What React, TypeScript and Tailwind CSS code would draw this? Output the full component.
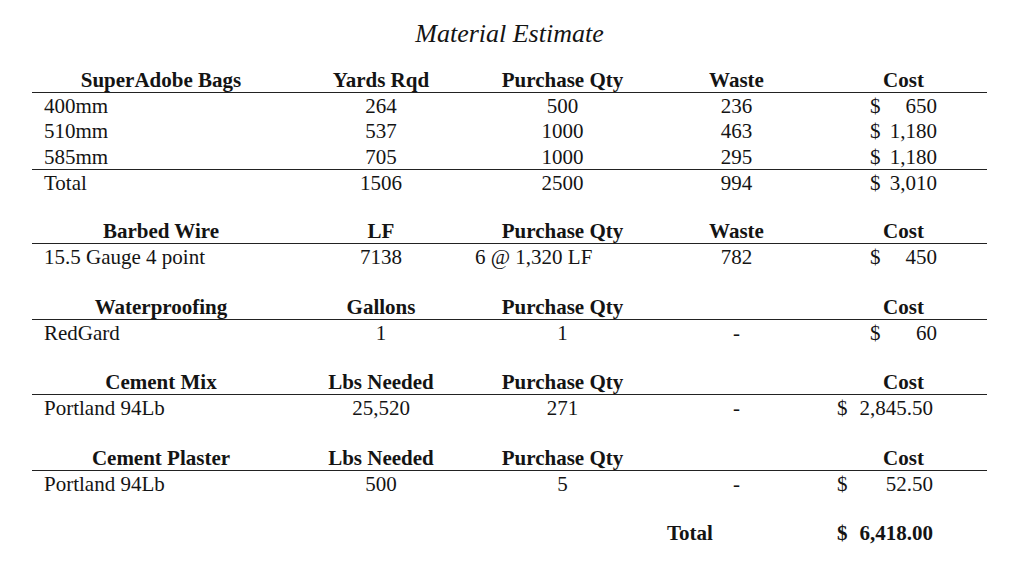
import React from "react";

const GRID =
  "grid grid-cols-[258px_182px_181px_167px_167px] h-[25.2px] items-start leading-[21px]";

function Cost({ v, wide, bold }: { v: string; wide?: boolean; bold?: boolean }) {
  return (
    <div className="flex">
      <div
        className={
          "flex justify-between " +
          (wide ? "ml-[17px] w-[96px]" : "ml-[50px] w-[67px]") +
          (bold ? " font-bold" : "")
        }
      >
        <span>$</span>
        <span>{v}</span>
      </div>
    </div>
  );
}

function Header({ h }: { h: string[] }) {
  return (
    <div className={GRID + " pt-[2px] border-b border-[#222] font-bold"}>
      {h.map((t, i) => (
        <div key={i} className="text-center">
          {t}
        </div>
      ))}
    </div>
  );
}

function Row({
  c,
  cost,
  wide,
  top,
}: {
  c: string[];
  cost: string;
  wide?: boolean;
  top?: boolean;
}) {
  return (
    <div className={GRID + " pt-[3px]" + (top ? " border-t border-[#222]" : "")}>
      <div className="pl-[12px]">{c[0]}</div>
      <div className="text-center">{c[1]}</div>
      <div className="text-center">{c[2]}</div>
      <div className="text-center">{c[3]}</div>
      <Cost v={cost} wide={wide} />
    </div>
  );
}

function Blank() {
  return <div className="h-[25.2px]" />;
}

export default function App() {
  return (
    <div
      className="w-[1024px] h-[565px] bg-white text-[#141414] text-[21px] overflow-hidden"
      style={{ fontFamily: '"Liberation Serif", "Times New Roman", serif' }}
    >
      <div className="pl-[32px] w-[987px]">
        <div className="pt-[19px] h-[68px] text-center italic text-[26px] leading-[30px]">
          Material Estimate
        </div>
        <Header h={["SuperAdobe Bags", "Yards Rqd", "Purchase Qty", "Waste", "Cost"]} />
        <Row c={["400mm", "264", "500", "236"]} cost="650" />
        <Row c={["510mm", "537", "1000", "463"]} cost="1,180" />
        <Row c={["585mm", "705", "1000", "295"]} cost="1,180" />
        <Row c={["Total", "1506", "2500", "994"]} cost="3,010" top />
        <Blank />
        <Header h={["Barbed Wire", "LF", "Purchase Qty", "Waste", "Cost"]} />
        <div className={GRID + " pt-[3px]"}>
          <div className="pl-[12px]">15.5 Gauge 4 point</div>
          <div className="text-center">7138</div>
          <div className="pl-[3px]">6 @ 1,320 LF</div>
          <div className="text-center">782</div>
          <Cost v="450" />
        </div>
        <Blank />
        <Header h={["Waterproofing", "Gallons", "Purchase Qty", "", "Cost"]} />
        <Row c={["RedGard", "1", "1", "-"]} cost="60" />
        <Blank />
        <Header h={["Cement Mix", "Lbs Needed", "Purchase Qty", "", "Cost"]} />
        <Row c={["Portland 94Lb", "25,520", "271", "-"]} cost="2,845.50" wide />
        <Blank />
        <Header h={["Cement Plaster", "Lbs Needed", "Purchase Qty", "", "Cost"]} />
        <Row c={["Portland 94Lb", "500", "5", "-"]} cost="52.50" wide />
        <Blank />
        <div className={GRID + " pt-[1.5px]"}>
          <div />
          <div />
          <div />
          <div className="pl-[14px] font-bold">Total</div>
          <Cost v="6,418.00" wide bold />
        </div>
      </div>
    </div>
  );
}
